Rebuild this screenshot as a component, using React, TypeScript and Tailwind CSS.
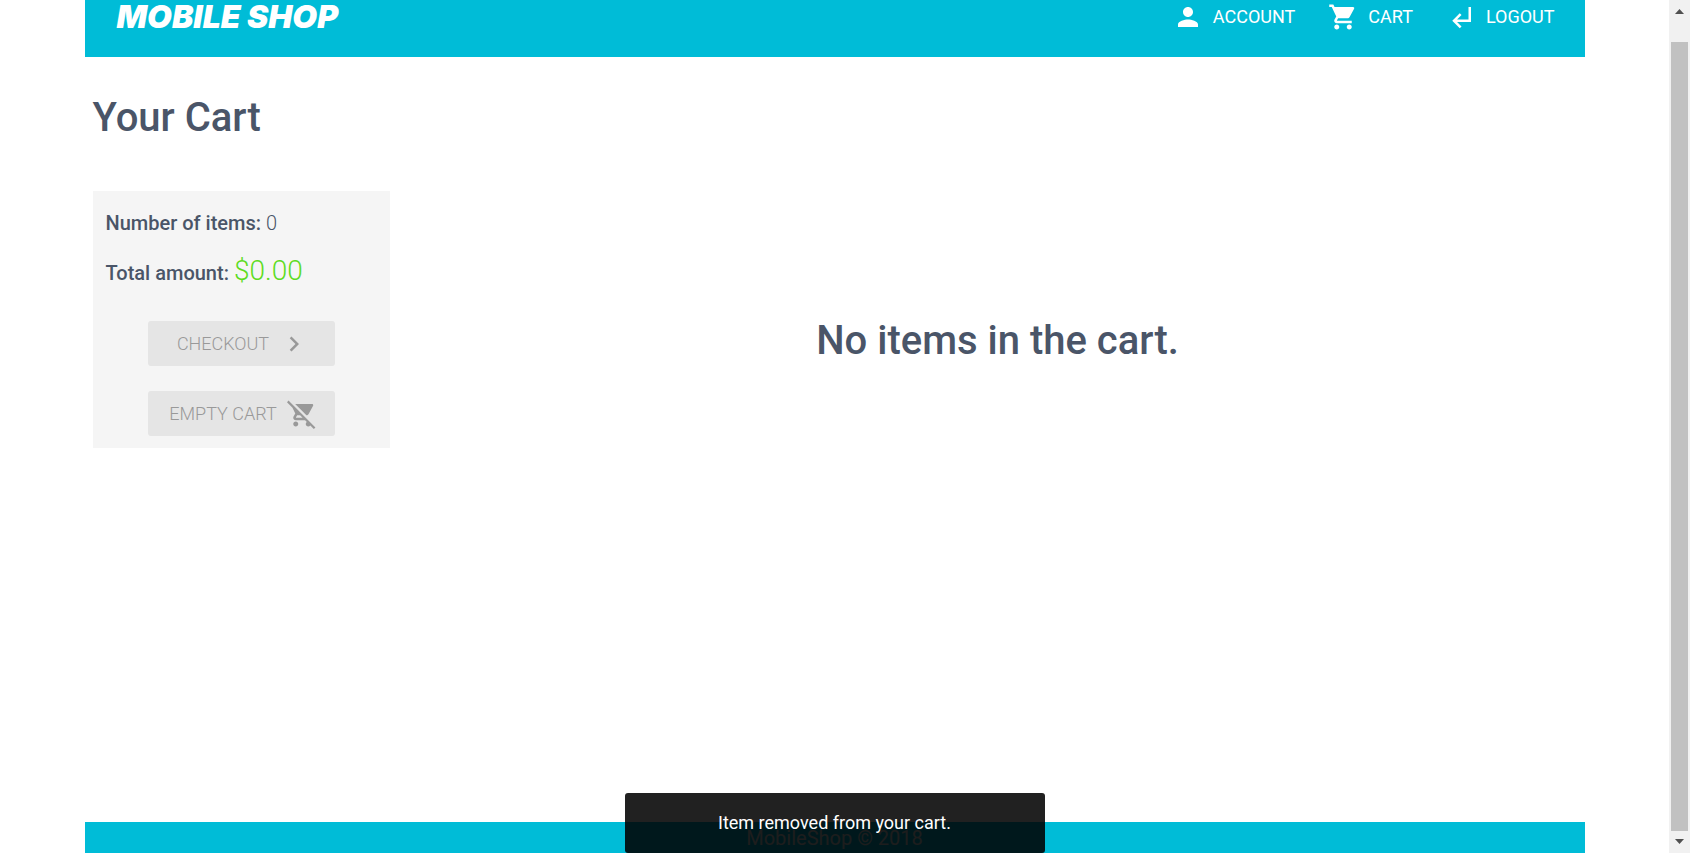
import { MdPerson, MdShoppingCart, MdSubdirectoryArrowLeft, MdChevronRight } from "react-icons/md";

function RemoveCartIcon({ className }: { className?: string }) {
  return (
    <svg viewBox="0 0 24 24" fill="currentColor" className={className} aria-hidden="true">
      <path d="M22.73 22.73L2.77 2.77 2 2l-.73-.73L0 2.54l4.39 4.39 2.21 4.66-1.35 2.45c-.16.28-.25.61-.25.96 0 1.1.9 2 2 2h7.46l1.38 1.38c-.5.36-.83.95-.83 1.62 0 1.1.89 2 1.99 2 .67 0 1.26-.33 1.62-.84L21.46 24l1.27-1.27zM7.42 15c-.14 0-.25-.11-.25-.25l.03-.12.9-1.63h2.36l2 2H7.42zm8.13-2c.75 0 1.41-.41 1.75-1.03l3.58-6.49c.08-.14.12-.31.12-.48 0-.55-.45-1-1-1H6.54l9.01 9zM7 18c-1.1 0-1.99.9-1.99 2S5.9 22 7 22s2-.9 2-2-.9-2-2-2z" />
    </svg>
  );
}

const links = [
  { label: "ACCOUNT", Icon: MdPerson },
  { label: "CART", Icon: MdShoppingCart },
  { label: "LOGOUT", Icon: MdSubdirectoryArrowLeft },
];

function Header() {
  return (
    <header className="flex items-center justify-between bg-[#00bcd7] px-[30px] pb-[23px]">
      <a href="#" className="pl-0.5 font-['Inter',sans-serif] text-[32px] leading-[34px] font-black text-white italic">
        MOBILE SHOP
      </a>
      <nav className="flex gap-[33px]">
        {links.map(({ label, Icon }) => (
          <a key={label} href="#" className="flex items-center gap-[10px] text-lg text-white">
            <Icon className="size-[30px]" aria-hidden="true" />
            {label}
          </a>
        ))}
      </nav>
    </header>
  );
}

function Summary() {
  return (
    <aside className="w-[297px] shrink-0 bg-[#f5f5f5] px-[13px] pt-4 pb-3 text-xl">
      <p className="leading-8">
        <b className="font-medium">Number of items:</b> <span className="font-light">0</span>
      </p>
      <p className="mt-3 leading-10">
        <b className="font-medium">Total amount:</b>{" "}
        <span className="text-[28px] font-light text-[#5edc1f]">$0.00</span>
      </p>
      <div className="mt-7 flex flex-col items-center gap-[25px] text-lg font-light text-[#999999]">
        <button disabled className="flex h-[45px] w-[187px] items-center justify-center gap-[10px] rounded-[3px] bg-[#e5e5e5] pl-1">
          CHECKOUT
          <MdChevronRight className="size-[30px]" aria-hidden="true" />
        </button>
        <button disabled className="flex h-[45px] w-[187px] items-center justify-center gap-[10px] rounded-[3px] bg-[#e5e5e5] pl-1">
          EMPTY CART
          <RemoveCartIcon className="size-[30px]" />
        </button>
      </div>
    </aside>
  );
}

function ScrollTrack() {
  return (
    <div className="flex w-[21px] shrink-0 flex-col items-center bg-[#f1f1f1]" aria-hidden="true">
      <svg viewBox="0 0 9 5" className="mt-[9px] h-[5px] w-[9px]" fill="#505050">
        <path d="M4.5 0L9 5H0z" />
      </svg>
      <div className="mt-7 w-[17px] grow bg-[#c1c1c1]" />
      <svg viewBox="0 0 9 5" className="mt-2 mb-[9px] h-[5px] w-[9px]" fill="#505050">
        <path d="M0 0h9L4.5 5z" />
      </svg>
    </div>
  );
}

export default function App() {
  return (
    <div className="flex h-screen overflow-hidden bg-white font-['Roboto',sans-serif] text-[#4a5568]">
      <div className="relative flex min-w-0 grow flex-col">
        <div className="mx-auto flex w-full max-w-[1500px] grow flex-col">
          <Header />
          <main className="grow px-2 pt-[37px]">
            <h1 className="text-[40px] leading-12 font-medium">Your Cart</h1>
            <div className="mt-[49px] flex items-start gap-[29px]">
              <Summary />
              <h2 className="grow pt-[126px] text-center text-[40px] leading-12 font-medium">
                No items in the cart.
              </h2>
            </div>
          </main>
          <footer className="flex h-[31px] items-center justify-center bg-[#00bcd7] text-xl text-[#e0e0e0]">
            MobileShop © 2018
          </footer>
        </div>
        <div className="pointer-events-none absolute inset-x-0 bottom-0 flex justify-center">
          <div role="status" className="w-[420px] rounded-[3px] bg-black/87 text-center text-lg leading-[60px] text-white">
            Item removed from your cart.
          </div>
        </div>
      </div>
      <ScrollTrack />
    </div>
  );
}
